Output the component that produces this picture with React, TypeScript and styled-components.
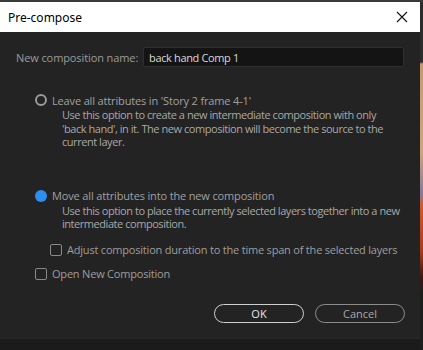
import React from "react";
import styled, { createGlobalStyle } from "styled-components";

const Global = createGlobalStyle`
  html, body { margin: 0; padding: 0; background: #1c1c1c; }
  body { width: 423px; height: 350px; overflow: hidden; }
  * { box-sizing: border-box; }
`;

const Screen = styled.div`
  width: 423px;
  height: 350px;
  display: flex;
  flex-direction: column;
  background: #1c1c1c;
`;

const TopStrip = styled.div`
  height: 2px;
  background: #3a3a3a;
`;

const Main = styled.div`
  flex: 1;
  display: flex;
`;

const Dialog = styled.div`
  width: 420px;
  display: flex;
  flex-direction: column;
`;

const SideStrip = styled.div`
  width: 3px;
  background: linear-gradient(
    to bottom,
    #2c2c2c 0px,
    #2c2c2c 60px,
    #c79a6e 62px,
    #d0a47a 150px,
    #8a7a9a 190px,
    #d2582c 205px,
    #a83a1a 250px,
    #3a1a10 275px,
    #1e1e1e 290px
  );
`;

const TitleBar = styled.div`
  height: 30px;
  background: #ffffff;
  display: flex;
  align-items: center;
  justify-content: space-between;
  padding: 0 8px 0 8px;
  font-family: "Noto Sans", "Open Sans", sans-serif;
  font-size: 12px;
  color: #000;
`;

const CloseIcon = () => (
  <svg width="12" height="12" viewBox="0 0 12 12">
    <path d="M1 1 L11 11 M11 1 L1 11" stroke="#111" strokeWidth="1.1" fill="none" />
  </svg>
);

const CloseBtn = styled.div`
  width: 14px;
  height: 14px;
  display: flex;
  align-items: center;
  justify-content: center;
  margin-right: 3px;
`;

const Body = styled.div`
  height: 306px;
  overflow: hidden;
  background: #232323;
  display: flex;
  flex-direction: column;
  font-family: "Open Sans", "Noto Sans", sans-serif;
  font-size: 11px;
  color: #a3a3a3;
  padding-top: 15px;
`;

const NameRow = styled.div`
  display: flex;
  align-items: center;
  padding-left: 16px;
`;

const Label = styled.span`
  width: 127px;
  color: #9c9c9c;
  letter-spacing: -0.1px;
`;

const Input = styled.div`
  width: 261px;
  height: 20px;
  background: #141414;
  border: 1px solid #2f2f2f;
  border-radius: 2px;
  color: #d8d8d8;
  padding-left: 5px;
  display: flex;
  align-items: center;
  font-size: 11px;
  letter-spacing: -0.35px;
`;

const Option = styled.div<{ $top: number }>`
  margin-top: ${(p) => p.$top}px;
  padding-left: 35px;
`;

const OptionHead = styled.div`
  display: flex;
  align-items: center;
  gap: 5px;
  height: 14px;
`;

const Radio = styled.span<{ $on?: boolean }>`
  width: 12px;
  height: 12px;
  border-radius: 50%;
  border: ${(p) => (p.$on ? "none" : "2px solid #9a9a9a")};
  background: ${(p) => (p.$on ? "#2e8ef0" : "transparent")};
  flex: none;
`;

const OptionText = styled.span`
  color: #a0a0a0;
  letter-spacing: -0.15px;
`;

const Desc = styled.div`
  padding-left: 27px;
  line-height: 13.5px;
  color: #a8a8a8;
  letter-spacing: -0.45px;
  white-space: nowrap;
  margin-top: 1px;
`;

const CheckRow = styled.div<{ $indent: number; $top: number }>`
  display: flex;
  align-items: center;
  gap: 5px;
  padding-left: ${(p) => p.$indent}px;
  margin-top: ${(p) => p.$top}px;
  height: 14px;
`;

const Check = styled.span`
  width: 12px;
  height: 12px;
  border: 1.5px solid #8a8a8a;
  border-radius: 2px;
  flex: none;
`;

const CheckText = styled.span`
  color: #9e9e9e;
  letter-spacing: -0.2px;
  white-space: nowrap;
`;

const Buttons = styled.div`
  display: flex;
  justify-content: flex-end;
  gap: 11px;
  padding-right: 15px;
  margin-top: 23px;
`;

const Button = styled.div<{ $primary?: boolean }>`
  width: 90px;
  height: 19px;
  border-radius: 10px;
  border: 1.5px solid ${(p) => (p.$primary ? "#cfcfcf" : "#8c8c8c")};
  color: ${(p) => (p.$primary ? "#e6e6e6" : "#a8a8a8")};
  display: flex;
  align-items: center;
  justify-content: center;
  font-size: 11px;
`;

const Footer = styled.div`
  flex: 1;
  background: #1b1b1b;
  border-top: 1px solid #262626;
`;

export default function App() {
  return (
    <>
      <Global />
      <Screen>
        <TopStrip />
        <Main>
          <Dialog>
            <TitleBar>
              <span>Pre-compose</span>
              <CloseBtn>
                <CloseIcon />
              </CloseBtn>
            </TitleBar>
            <Body>
              <NameRow>
                <Label>New composition name:</Label>
                <Input>back hand Comp 1</Input>
              </NameRow>
              <Option $top={26}>
                <OptionHead>
                  <Radio />
                  <OptionText>Leave all attributes in 'Story 2 frame 4-1'</OptionText>
                </OptionHead>
                <Desc>
                  Use this option to create a new intermediate composition with only
                  <br />
                  'back hand', in it. The new composition will become the source to the
                  <br />
                  current layer.
                </Desc>
              </Option>
              <Option $top={40}>
                <OptionHead>
                  <Radio $on />
                  <OptionText>Move all attributes into the new composition</OptionText>
                </OptionHead>
                <Desc>
                  Use this option to place the currently selected layers together into a new
                  <br />
                  intermediate composition.
                </Desc>
              </Option>
              <CheckRow $indent={50} $top={12}>
                <Check />
                <CheckText>Adjust composition duration to the time span of the selected layers</CheckText>
              </CheckRow>
              <CheckRow $indent={35} $top={10}>
                <Check />
                <CheckText>Open New Composition</CheckText>
              </CheckRow>
              <Buttons>
                <Button $primary>OK</Button>
                <Button>Cancel</Button>
              </Buttons>
            </Body>
            <Footer />
          </Dialog>
          <SideStrip />
        </Main>
      </Screen>
    </>
  );
}
